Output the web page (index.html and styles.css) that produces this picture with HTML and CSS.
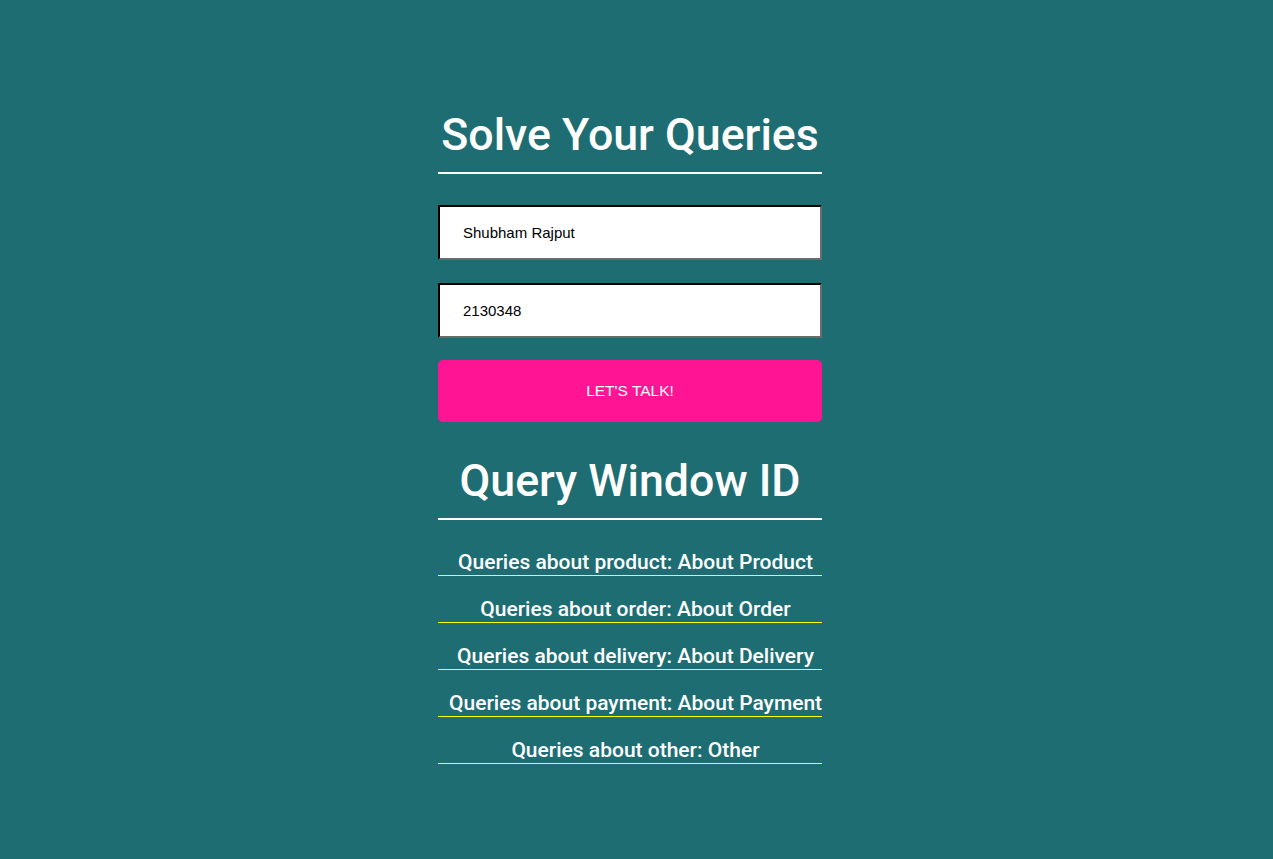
FILE: index.html
```html
<!DOCTYPE html>
<html>
<head>
<meta charset="utf-8">
<link rel="stylesheet" href="styles.css">
</head>
<body>
<div class="page">
  <div class="box">
    <h1 class="title">Solve Your Queries</h1>
    <form class="form">
      <input class="field" type="text" value="Shubham Rajput">
      <input class="field" type="text" value="2130348">
      <button class="btn" type="button">LET'S TALK!</button>
    </form>
    <h2 class="title title2">Query Window ID</h2>
    <ul class="list">
      <li class="item">Queries about product: About Product</li>
      <li class="item">Queries about order: About Order</li>
      <li class="item">Queries about delivery: About Delivery</li>
      <li class="item">Queries about payment: About Payment</li>
      <li class="item">Queries about other: Other</li>
    </ul>
  </div>
</div>
</body>
</html>
```
FILE: styles.css
```css
html, body {
  margin: 0;
  padding: 0;
  background: #1e6d73;
  height: 100%;
}
.page {
  display: flex;
  justify-content: center;
  padding: 106px 13px 0 0;
}
.box {
  width: 384px;
  display: flex;
  flex-direction: column;
}
.title {
  margin: 0;
  font-family: Roboto, sans-serif;
  font-weight: 500;
  font-size: 44.7px;
  line-height: 58px;
  color: #ffffff;
  text-align: center;
  border-bottom: 2px solid #ffffff;
  padding-bottom: 8px;
}
.form {
  display: flex;
  flex-direction: column;
  gap: 23px;
  margin-top: 31px;
}
.field {
  box-sizing: border-box;
  height: 55px;
  width: 100%;
  margin: 0;
  border: 2px inset #767676;
  border-top-color: #1f1f1f;
  border-left-color: #1f1f1f;
  border-bottom-color: #6b6b6b;
  border-right-color: #6b6b6b;
  padding: 0 23px;
  font-family: "Liberation Sans", Arial, sans-serif;
  font-size: 15px;
  color: #000;
  background: #fff;
}
.btn {
  height: 62px;
  margin-top: -1px;
  border: none;
  border-radius: 5px;
  background: #ff1493;
  color: #fff;
  font-family: "Liberation Sans", Arial, sans-serif;
  font-size: 15.5px;
}
.title2 {
  margin-top: 30px;
}
.list {
  list-style: none;
  margin: 30px 0 0;
  padding: 0;
  display: flex;
  flex-direction: column;
  gap: 21px;
}
.item {
  font-family: Roboto, sans-serif;
  font-weight: 500;
  font-size: 21px;
  line-height: 25px;
  color: #fff;
  text-align: center;
  white-space: nowrap;
  padding-left: 11px;
  border-bottom: 1px solid #ffff00;
}
```
